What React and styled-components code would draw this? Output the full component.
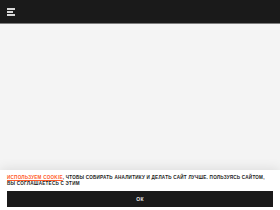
import React from "react";
import styled, { createGlobalStyle } from "styled-components";

const GlobalStyle = createGlobalStyle`
  html, body {
    margin: 0;
    padding: 0;
    background: #f4f4f4;
  }
  body {
    font-family: "Liberation Sans", Arial, sans-serif;
  }
`;

const App = () => {
  return (
    <Page>
      <GlobalStyle />
      <Header>
        <MenuButton aria-label="menu">
          <Bar $width={8} />
          <Bar $width={6} />
          <Bar $width={8} />
        </MenuButton>
      </Header>
      <Main />
      <CookieBanner>
        <CookieText>
          <CookieLink href="#">ИСПОЛЬЗУЕМ COOKIE</CookieLink>, ЧТОБЫ СОБИРАТЬ АНАЛИТИКУ И ДЕЛАТЬ САЙТ ЛУЧШЕ.
          ПОЛЬЗУЯСЬ САЙТОМ,
          <br />
          ВЫ СОГЛАШАЕТЕСЬ С ЭТИМ
        </CookieText>
        <OkButton>ОК</OkButton>
      </CookieBanner>
    </Page>
  );
};

const Page = styled.div`
  height: 100vh;
  display: flex;
  flex-direction: column;
  overflow: hidden;
`;

const Header = styled.header`
  height: 23px;
  flex-shrink: 0;
  background: #1a1a1a;
  border-bottom: 1px solid #7d7d7d;
  display: flex;
  align-items: center;
  padding: 0 7px;
`;

const MenuButton = styled.div`
  display: flex;
  flex-direction: column;
  gap: 1px;
`;

const Bar = styled.span`
  display: block;
  width: ${(p) => p.$width}px;
  height: 2px;
  background: #d8d8d8;
`;

const Main = styled.main`
  flex: 1;
  background: #f4f4f4;
`;

const CookieBanner = styled.div`
  flex-shrink: 0;
  background: #ffffff;
  box-shadow: 0 0 12px rgba(0, 0, 0, 0.12);
  padding: 3px 7px 3px;
  display: flex;
  flex-direction: column;
  gap: 4px;
`;

const CookieText = styled.p`
  margin: 0;
  font-size: 4.6px;
  line-height: 6px;
  font-weight: 700;
  color: #1a1a1a;
  letter-spacing: 0.24px;
  padding-top: 2px;
  white-space: nowrap;
`;

const CookieLink = styled.a`
  color: #ff5a28;
  text-decoration: underline;
`;

const OkButton = styled.button`
  height: 16px;
  border: none;
  background: #1a1a1a;
  color: #e8e8e8;
  font-family: "Liberation Sans", Arial, sans-serif;
  font-weight: 700;
  font-size: 5px;
  letter-spacing: 0.2px;
  padding: 0;
  cursor: pointer;
`;

export default App;
